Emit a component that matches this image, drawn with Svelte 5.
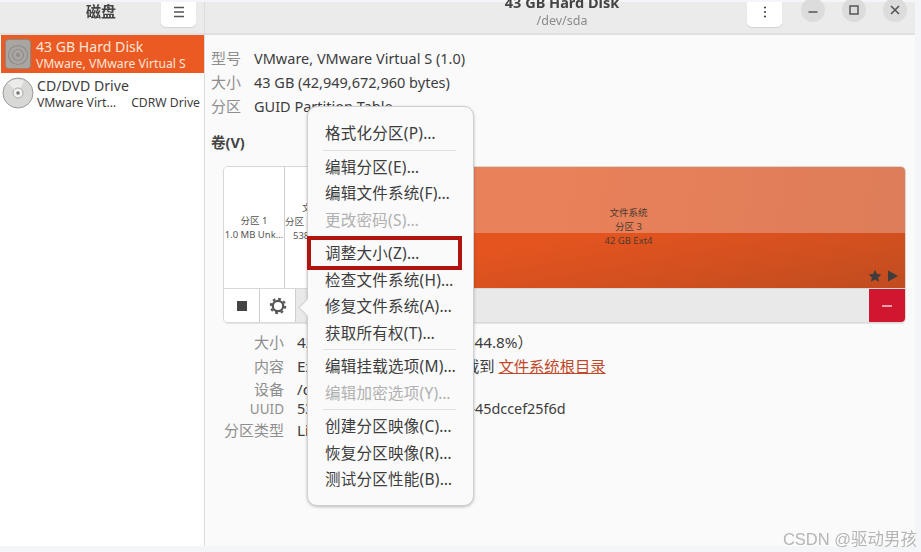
<script>
  const info = [
    ['型号', 'VMware, VMware Virtual S (1.0)'],
    ['大小', '43 GB (42,949,672,960 bytes)'],
    ['分区', 'GUID Partition Table']
  ];
  const menu = [
    [{ t: '格式化分区(P)…' }],
    [{ t: '编辑分区(E)…' }, { t: '编辑文件系统(F)…' }, { t: '更改密码(S)…', off: true }],
    [{ t: '调整大小(Z)…', mark: true }, { t: '检查文件系统(H)…' }, { t: '修复文件系统(A)…' }, { t: '获取所有权(T)…' }],
    [{ t: '编辑挂载选项(M)…' }, { t: '编辑加密选项(Y)…', off: true }],
    [{ t: '创建分区映像(C)…' }, { t: '恢复分区映像(R)…' }, { t: '测试分区性能(B)…' }]
  ];
</script>

<div class="page">
  <div class="window">
    <aside class="side">
      <header class="shead">
        <div class="stitle">磁盘</div>
        <button class="hbtn" aria-label="菜单">
          <svg width="14" height="14" viewBox="0 0 14 14"><path d="M2 2.5h10M2 7h10M2 11.5h10" stroke="#555" stroke-width="1.4" fill="none"/></svg>
        </button>
      </header>
      <div class="drive sel">
        <svg class="dicon" width="26" height="30" viewBox="0 0 26 30">
          <rect x="0.5" y="0.5" width="25" height="29" rx="3" fill="#a9a6a2" stroke="#8a8784"/>
          <circle cx="13" cy="16" r="9.5" fill="none" stroke="#8f8d8a" stroke-width="1.2"/>
          <circle cx="13" cy="16" r="5.5" fill="none" stroke="#8f8d8a" stroke-width="1.2"/>
          <circle cx="13" cy="16" r="2" fill="#8f8d8a"/>
        </svg>
        <div class="dtext">
          <div class="dname">43 GB Hard Disk</div>
          <div class="dsub">VMware, VMware Virtual S</div>
        </div>
      </div>
      <div class="drive">
        <svg class="dicon" width="32" height="32" viewBox="0 0 32 32">
          <circle cx="16" cy="16" r="15" fill="#d8d8d6" stroke="#9a9a98"/>
          <path d="M16 16 L6 6 A14 14 0 0 1 22 4Z" fill="#ececea"/>
          <circle cx="16" cy="16" r="5" fill="#f3f3f1" stroke="#aaa"/>
          <circle cx="16" cy="16" r="1.8" fill="#777"/>
        </svg>
        <div class="dtext">
          <div class="dname">CD/DVD Drive</div>
          <div class="dsub split"><span>VMware Virt…</span><span>CDRW Drive</span></div>
        </div>
      </div>
    </aside>

    <main class="main">
      <header class="mhead">
        <div class="titles">
          <div class="mtitle">43 GB Hard Disk</div>
          <div class="msub">/dev/sda</div>
        </div>
        <button class="hbtn kebab" aria-label="更多">
          <svg width="14" height="14" viewBox="0 0 14 14"><circle cx="7" cy="2.5" r="1.1" fill="#444"/><circle cx="7" cy="7" r="1.1" fill="#444"/><circle cx="7" cy="11.5" r="1.1" fill="#444"/></svg>
        </button>
        <div class="wm">
          <span class="wbtn"><svg width="12" height="12" viewBox="0 0 12 12"><path d="M1.5 8h9" stroke="#555" stroke-width="1.5"/></svg></span>
          <span class="wbtn"><svg width="12" height="12" viewBox="0 0 12 12"><rect x="2" y="2" width="8" height="8" fill="none" stroke="#555" stroke-width="1.5"/></svg></span>
          <span class="wbtn"><svg width="12" height="12" viewBox="0 0 12 12"><path d="M2 2l8 8M10 2l-8 8" stroke="#555" stroke-width="1.6"/></svg></span>
        </div>
      </header>

      <div class="content">
        <div class="info">
          {#each info as [k, v]}
            <div class="k">{k}</div><div class="v">{v}</div>
          {/each}
        </div>

        <div class="voltitle">卷(V)</div>

        <section class="volumes">
          <div class="map">
            <div class="part p1">分区 1<br />1.0 MB Unk…</div>
            <div class="part p2">
              <div class="lines">
                <span class="l1">文件系统</span>
                <span>分区 2</span>
                <span class="l3">538 MB</span>
              </div>
            </div>
            <div class="part p3">
              <div class="fill-light"></div>
              <div class="fill-dark"></div>
              <div class="p3text">文件系统<br />分区 3<br />42 GB Ext4</div>
              <div class="flags">
                <svg width="14" height="14" viewBox="0 0 14 14"><path d="M7 .8l1.9 4.1 4.5.5-3.3 3 .9 4.4L7 10.6l-4 2.2.9-4.4-3.3-3 4.5-.5z" fill="#3d3d3d"/></svg>
                <svg width="12" height="14" viewBox="0 0 12 14"><path d="M1 1.5L11 7 1 12.5z" fill="#3d3d3d"/></svg>
              </div>
            </div>
          </div>
          <div class="tools">
            <button class="tool" aria-label="停止"><span class="stop"></span></button>
            <button class="tool" aria-label="设置">
              <svg width="18" height="18" viewBox="0 0 18 18">
                <circle cx="9" cy="9" r="5.2" fill="none" stroke="#555" stroke-width="2.2"/>
                <circle cx="9" cy="9" r="7.2" fill="none" stroke="#555" stroke-width="2" stroke-dasharray="2.8 2.85"/>
              </svg>
            </button>
            <div class="spacer"></div>
            <button class="minus" aria-label="删除"><span></span></button>
          </div>
        </section>

        <div class="details">
          <div class="k">大小</div><div class="v">42 GB — 23 GB 可用（占 44.8%）</div>
          <div class="k">内容</div><div class="v">Ext4 (版本 1.0.0) — 已挂载到 <span class="link">文件系统根目录</span></div>
          <div class="k">设备</div><div class="v">/dev/sda3</div>
          <div class="k uuid">UUID</div><div class="v uuidv">53a1c2e4-7b6d-4f1a-9c3e-45dccef25f6d</div>
          <div class="k">分区类型</div><div class="v">Linux 文件系统</div>
        </div>
      </div>
    </main>
  </div>

  <div class="popover">
    <span class="arrow"></span>
    {#each menu as group, i}
      {#if i > 0}<div class="sep"></div>{/if}
      {#each group as item}
        <div class="item" class:off={item.off} class:mark={item.mark}>{item.t}</div>
      {/each}
    {/each}
  </div>

  <div class="watermark">CSDN @驱动男孩</div>
</div>

<style>
  :global(body) {
    margin: 0;
    background: #f4f5f9;
    font-family: "Noto Sans", "Noto Sans CJK SC", sans-serif;
  }
  .page {
    position: relative;
    width: 921px;
    height: 552px;
    overflow: hidden;
    padding: 2px 6px 6px 0;
    box-sizing: border-box;
    color: #3d3d3d;
    filter: blur(0.55px);
  }
  .window {
    display: flex;
    height: 100%;
    background: #fafafa;
  }
  button {
    border: 0;
    padding: 0;
    font: inherit;
    display: flex;
    align-items: center;
    justify-content: center;
  }
  .side {
    width: 204px;
    flex: none;
    background: #fff;
    border-right: 1px solid #dcdcdc;
    display: flex;
    flex-direction: column;
  }
  .shead {
    height: 31px;
    flex: none;
    background: #ebebeb;
    border-bottom: 2px solid #e0e0e0;
    display: flex;
    justify-content: flex-end;
    position: relative;
    padding-right: 8px;
  }
  .stitle {
    position: absolute;
    left: 86px;
    top: -1px;
    font-size: 15px;
    font-weight: 700;
    line-height: 20px;
    color: #444;
  }
  .hbtn {
    width: 35px;
    height: 25px;
    background: #fff;
    border-radius: 0 0 5px 5px;
    box-shadow: 0 1px 1px #d2d2d2;
    padding-bottom: 5px;
    box-sizing: border-box;
  }
  .drive {
    display: flex;
    align-items: center;
    gap: 3px;
    height: 38px;
    padding-left: 1px;
    margin-left: 1px;
    margin-bottom: 1px;
  }
  .drive.sel {
    background: #ea5a22;
    color: #fff;
    padding-left: 4px;
    gap: 5px;
  }
  .dicon { flex: none; }
  .dtext {
    flex: 1;
    min-width: 0;
    padding-right: 4px;
  }
  .dname {
    font-size: 14.1px;
    line-height: 18px;
  }
  .dsub {
    font-size: 12.2px;
    line-height: 15px;
    white-space: nowrap;
  }
  .split {
    display: flex;
    justify-content: space-between;
  }
  .sel .dname, .sel .dsub { color: #fde5da; }

  .main {
    flex: 1;
    min-width: 0;
    display: flex;
    flex-direction: column;
  }
  .mhead {
    height: 31px;
    flex: none;
    background: #ebebeb;
    border-bottom: 2px solid #e0e0e0;
    display: flex;
    position: relative;
  }
  .titles {
    position: absolute;
    left: 0;
    width: 714px;
    top: -8px;
    text-align: center;
  }
  .mtitle {
    font-size: 14.5px;
    font-weight: 700;
    line-height: 17px;
    color: #444;
  }
  .msub {
    font-size: 12.5px;
    line-height: 16px;
    color: #8a8a8a;
    margin-top: 2px;
  }
  .kebab { margin-left: 542px; }
  .wm {
    display: flex;
    gap: 17px;
    margin-left: 19px;
    align-self: flex-start;
  }
  .wbtn {
    width: 24px;
    height: 24px;
    margin-top: -4px;
    border-radius: 50%;
    background: #dcdcdc;
    display: flex;
    align-items: center;
    justify-content: center;
  }
  .content {
    flex: 1;
    padding: 11px 9px 0 6px;
    min-height: 0;
  }
  .info {
    display: grid;
    grid-template-columns: 30px 1fr;
    column-gap: 13px;
    font-size: 14.5px;
    line-height: 24px;
  }
  .k { color: #8e8e8e; font-size: 15px; }
  .voltitle {
    font-size: 14.5px;
    font-weight: 700;
    color: #444;
    line-height: 24px;
    margin-top: 12px;
    margin-bottom: 12px;
  }
  .volumes {
    margin-left: 12px;
    border: 1px solid #d8d8d8;
    border-radius: 5px;
    overflow: hidden;
    box-shadow: 0 1px 1px #e4e4e4;
  }
  .map {
    display: flex;
    height: 121px;
    border-bottom: 1px solid #d8d8d8;
  }
  .part {
    font-size: 9.5px;
    line-height: 14px;
    text-align: center;
    background: #fff;
    color: #555;
    display: flex;
    align-items: center;
    justify-content: center;
    white-space: nowrap;
    overflow: hidden;
    box-sizing: border-box;
  }
  .p1 { width: 61px; border-right: 1px solid #cfcfcf; }
  .p2 {
    width: 43px;
    justify-content: flex-start;
    padding-bottom: 11px;
  }
  .lines {
    display: flex;
    flex-direction: column;
    align-items: flex-start;
  }
  .l1 { margin-left: 17px; }
  .l3 { margin-left: 8px; }
  .p3 {
    flex: 1;
    position: relative;
    display: flex;
    flex-direction: column;
    align-items: stretch;
    justify-content: stretch;
  }
  .fill-light {
    height: 66px;
    background: linear-gradient(100deg, #e9815a 40%, #dd7d59 100%);
  }
  .fill-dark {
    flex: 1;
    background: linear-gradient(170deg, #e4541f 30%, #c04c20 100%);
  }
  .p3text {
    position: absolute;
    inset: 0;
    padding: 0 0 2px 24px;
    display: flex;
    align-items: center;
    justify-content: center;
    color: #4e3a30;
  }
  .flags {
    position: absolute;
    right: 6px;
    bottom: 5px;
    display: flex;
    gap: 5px;
    align-items: center;
  }
  .tools {
    display: flex;
    height: 33px;
    background: #e9e9e9;
  }
  .tool {
    width: 36px;
    background: #fff;
    border-right: 1px solid #cfcfcf;
  }
  .stop {
    width: 10px;
    height: 10px;
    background: #444;
  }
  .spacer { flex: 1; }
  .minus {
    width: 36px;
    background: #d0172f;
  }
  .minus span {
    width: 10px;
    height: 2px;
    background: #f1a0aa;
  }
  .details {
    display: grid;
    grid-template-columns: 61px 1fr;
    grid-template-rows: 24px 24px 22px 18px 24px;
    align-items: center;
    column-gap: 13px;
    font-size: 15.3px;
    line-height: 18px;
    margin: 7px 0 0 12px;
  }
  .details > div { white-space: nowrap; }
  .details .k { text-align: right; }
  .details .uuid { font-size: 13.5px; }
  .details .uuidv { font-size: 14.4px; }
  .link {
    color: #c0482a;
    text-decoration: underline;
  }
  .popover {
    position: absolute;
    left: 307px;
    top: 106px;
    width: 167px;
    height: 400px;
    box-sizing: border-box;
    padding: 13px 0 0;
    background: #fafafa;
    border: 1px solid #cfcfcf;
    border-radius: 10px;
    box-shadow: 0 1px 3px rgba(0,0,0,.25);
  }
  .arrow {
    position: absolute;
    left: -7px;
    top: 194px;
    width: 12px;
    height: 12px;
    background: #fafafa;
    border-left: 1px solid #cfcfcf;
    border-bottom: 1px solid #cfcfcf;
    transform: rotate(45deg);
  }
  .item {
    position: relative;
    font-size: 15.5px;
    letter-spacing: .25px;
    line-height: 26.5px;
    padding-left: 17px;
    color: #3d3d3d;
    white-space: nowrap;
  }
  .item.off { color: #b0b0b0; }
  .item.mark::after {
    content: "";
    position: absolute;
    left: -1px;
    top: -4px;
    width: 155px;
    height: 34px;
    box-sizing: border-box;
    border: 4px solid #b1140f;
  }
  .sep {
    height: 1px;
    margin: 3px 17px 3px 15px;
    background: #e0e0e0;
  }
  .watermark {
    position: absolute;
    right: 4px;
    bottom: 3px;
    font-family: "Liberation Sans", "Noto Sans CJK SC", sans-serif;
    font-size: 16.5px;
    line-height: 20px;
    color: #b5b5b5;
  }
</style>
